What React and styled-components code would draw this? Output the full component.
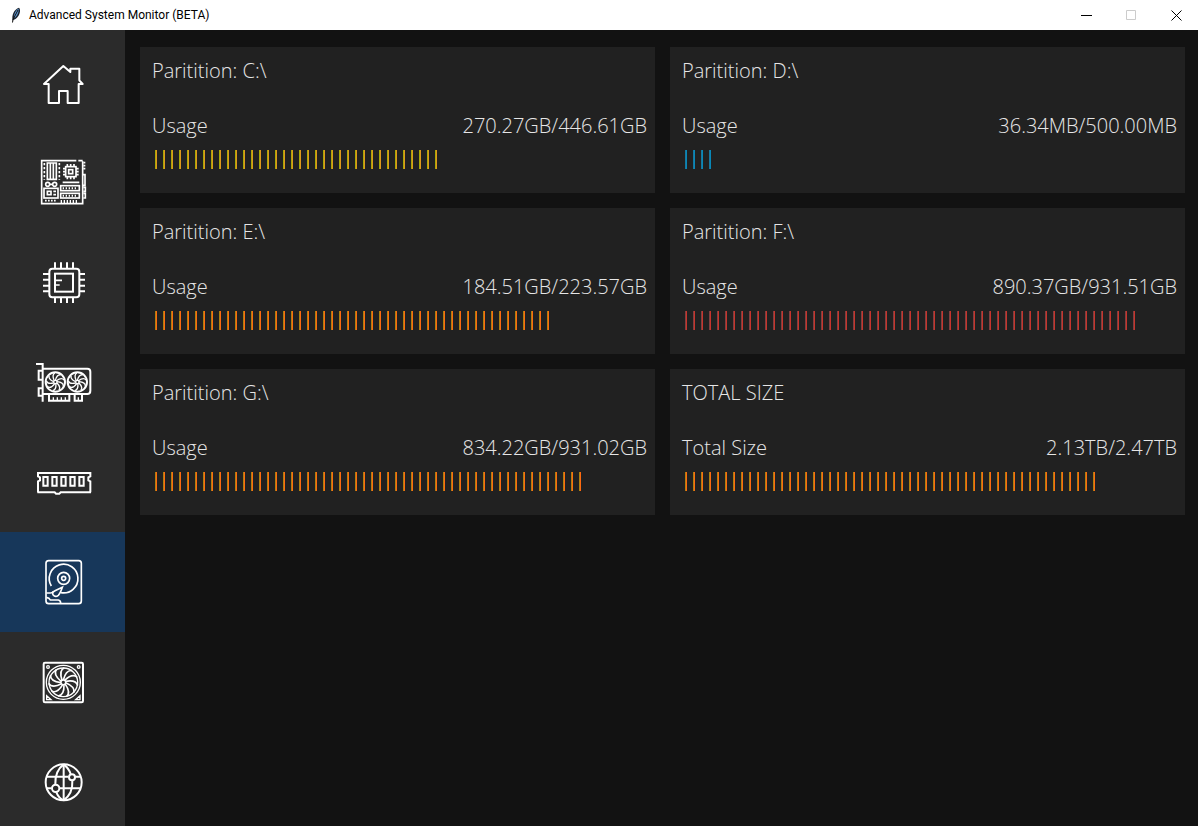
import React from "react";
import styled, { createGlobalStyle, css } from "styled-components";

const GlobalStyle = createGlobalStyle`
  *, *::before, *::after { box-sizing: border-box; }
  body {
    margin: 0;
    background: #121212;
    color: #e6e6e6;
    font-family: "Open Sans", "Noto Sans", sans-serif;
  }
`;

const Window = styled.div`
  display: flex;
  flex-direction: column;
  height: 100vh;
  overflow: hidden;
`;

const TitleBar = styled.header`
  display: flex;
  flex: none;
  align-items: center;
  height: 30px;
  padding-left: 8px;
  background: #ffffff;
  color: #000000;
`;

const WindowTitle = styled.h1`
  flex: 1;
  margin: 0 0 0 5px;
  font-family: Roboto, "Open Sans", sans-serif;
  font-size: 12px;
  font-weight: 400;
  line-height: 16px;
`;

const WindowButton = styled.button`
  display: flex;
  align-items: center;
  justify-content: center;
  width: 45px;
  height: 30px;
  padding: 0 0 0 2px;
  border: 0;
  background: transparent;
  color: ${(p) => (p.disabled ? "#cccccc" : "#000000")};
`;

const Body = styled.div`
  display: flex;
  flex: 1;
  min-height: 0;
`;

const Sidebar = styled.nav`
  display: flex;
  flex: none;
  flex-direction: column;
  width: 125px;
  padding-top: 2px;
  overflow: hidden;
  background: #2b2b2b;
`;

const NavButton = styled.button`
  display: flex;
  flex: none;
  align-items: center;
  height: 100px;
  padding: 0 0 0 30px;
  border: 0;
  background: transparent;
  color: #ffffff;
  ${(p) =>
    p.$active &&
    css`
      background: #17375a;
    `}
`;

const IconCanvas = styled.svg`
  display: block;
  width: 66px;
  height: 66px;
  fill: none;
  stroke: currentColor;
  stroke-width: 6;
`;

const Content = styled.main`
  display: grid;
  flex: 1;
  grid-template-columns: repeat(2, minmax(0, 1fr));
  align-content: start;
  gap: 15px;
  padding: 17px 13px 15px 15px;
  overflow: auto;
`;

const Card = styled.section`
  padding: 10px 8px 24px 12px;
  background: #212121;
  font-size: 20px;
  font-weight: 300;
  line-height: 28px;
`;

const CardTitle = styled.h2`
  margin: 0 0 27px;
  font-size: inherit;
  font-weight: inherit;
`;

const UsageRow = styled.div`
  display: flex;
  justify-content: space-between;
  margin-bottom: 10px;
`;

const TickBar = styled.div`
  height: 19px;
  margin-left: 3px;
  background: repeating-linear-gradient(
    to right,
    ${(p) => p.$left} 0 1px,
    ${(p) => p.$right} 1px 2px,
    transparent 2px 8px
  );
`;

const tones = {
  blue: ["#1878a0", "#0888b8"],
  amber: ["#a8a808", "#e0981c"],
  orange: ["#b08010", "#ff6a10"],
  red: ["#804040", "#c8342c"],
};

const partitions = [
  { title: "Paritition: C:\\", label: "Usage", value: "270.27GB/446.61GB", ticks: 36, tone: "amber" },
  { title: "Paritition: D:\\", label: "Usage", value: "36.34MB/500.00MB", ticks: 4, tone: "blue" },
  { title: "Paritition: E:\\", label: "Usage", value: "184.51GB/223.57GB", ticks: 50, tone: "orange" },
  { title: "Paritition: F:\\", label: "Usage", value: "890.37GB/931.51GB", ticks: 57, tone: "red" },
  { title: "Paritition: G:\\", label: "Usage", value: "834.22GB/931.02GB", ticks: 54, tone: "orange" },
  { title: "TOTAL SIZE", label: "Total Size", value: "2.13TB/2.47TB", ticks: 52, tone: "orange" },
];

function Icon({ top = -3, children }) {
  return (
    <IconCanvas viewBox={`0 ${top} 198 198`} aria-hidden="true">
      {children}
    </IconCanvas>
  );
}

function Blades({ cx, cy, inner, outer, count, width }) {
  const r = outer;
  const d = `M0 ${-inner} C ${r * 0.1} ${-r * 0.55}, ${r * 0.3} ${-r * 0.85}, ${r * 0.6} ${-r * 0.8}`;
  return (
    <g transform={`translate(${cx} ${cy})`} strokeWidth={width}>
      {Array.from({ length: count }, (_, i) => (
        <path key={i} d={d} transform={`rotate(${(i * 360) / count})`} />
      ))}
    </g>
  );
}

const HomeIcon = () => (
  <Icon top={-18}>
    <path
      strokeLinejoin="round"
      d="M42 87 100 33l21 18V41h27v35l10 11h-12v57h-33v-36H87v36H56V87Z"
    />
  </Icon>
);

const MotherboardIcon = () => (
  <Icon>
    <g strokeWidth="5">
      <path d="M158 34v127H35V32h104M145 32h13" />
      <path d="M160 38h6M160 47h6M160 56h6M158 74h7v32h-7M160 112h6v12h-6M160 130h6v14h-6" />
      <path d="M52 39h27v49H52zM61 39v49M70 39v49" />
      <path strokeDasharray="7 5" d="M43 39v50M88 39v50" />
      <rect x="107" y="50" width="31" height="30" />
      <rect x="116" y="59" width="12" height="12" />
      <path d="M112 42v8M122 42v8M132 42v8M112 80v8M122 80v8M132 80v8M99 56h8M99 65h8M99 74h8M138 56h8M138 65h8M138 74h8" />
      <circle cx="53" cy="103" r="6" />
      <circle cx="74" cy="103" r="6" />
      <path d="M59 103h9M98 97h50" />
      <rect x="92" y="107" width="56" height="15" />
      <rect x="92" y="130" width="56" height="14" />
      <path strokeWidth="4" d="M100 112v6M109 112v6M118 112v6M127 112v6M136 112v6M100 134v6M109 134v6M118 134v6M127 134v6M136 134v6" />
      <rect x="42" y="115" width="42" height="29" />
      <rect x="52" y="124" width="11" height="10" />
      <path d="M70 124h8M70 134h8" />
      <path strokeDasharray="5 4" d="M45 152h34" />
      <path strokeWidth="4" d="M94 150v10M103 150v10M112 150v10M121 150v10M130 150v10M139 150v10" />
    </g>
  </Icon>
);

const CpuIcon = () => (
  <Icon>
    <rect x="58" y="56" width="90" height="86" rx="9" />
    <rect x="75" y="71" width="54" height="54" />
    <path d="M77 91h19M77 105h12" strokeWidth="5" />
    <path d="M75 37v18M93 37v18M111 37v18M129 37v18M75 143v16M93 143v16M111 143v16M129 143v16" />
    <path d="M39 72h18M39 89h18M39 107h18M39 124h18M149 72h16M149 89h16M149 107h16M149 124h16" />
  </Icon>
);

const GpuIcon = () => (
  <Icon>
    <path d="M18 42h20v113M38 62H26v27h12M38 115H26v22h12" />
    <path d="M38 56h134q9 0 9 9v57q0 10-9 10H38" />
    <circle cx="76" cy="96" r="29" />
    <circle cx="142" cy="96" r="29" />
    <circle cx="76" cy="96" r="5" strokeWidth="4" />
    <circle cx="142" cy="96" r="5" strokeWidth="4" />
    <Blades cx={76} cy={96} inner={5} outer={27} count={9} width={4} />
    <Blades cx={142} cy={96} inner={5} outer={27} count={9} width={4} />
    <path d="M57 134v18h61v-18M134 134v18h22v-18" />
    <path strokeWidth="4" d="M70 142v8M82 142v8M94 142v8M106 142v8M145 142v8" />
  </Icon>
);

const RamIcon = () => (
  <Icon top={-33}>
    <path d="M24 97V64l6-3v-9l-6-3V39h157v10l-6 3v9l6 3v33" />
    <path d="M40 51h13v26H40zM67 51h13v26H67zM94 51h13v26H94zM121 51h13v26h-13zM148 51h13v26h-13z" />
    <path d="M22 97h52l4 4h10l4-4h91" />
  </Icon>
);

const DiskIcon = () => (
  <Icon>
    <g strokeWidth="5">
      <rect x="48" y="32" width="106" height="129" rx="8" />
      <path d="M64 108a43 43 0 1 1 29 20" />
      <circle cx="101" cy="85" r="18" />
      <circle cx="101" cy="85" r="6" />
      <path d="M97 112 75 122q-10 5-6 12 7 9 16 2 6-6 12-24Z" />
      <path d="M49 129h12q6 0 9-5M49 142q9 1 12 8h24q7 1 7 10" />
    </g>
  </Icon>
);

const FanIcon = () => (
  <Icon>
    <rect x="41" y="38" width="118" height="119" rx="4" />
    <circle cx="100" cy="97" r="51" strokeWidth="4" />
    <circle cx="100" cy="97" r="43" strokeWidth="4" />
    <circle cx="100" cy="97" r="7" strokeWidth="4" />
    <Blades cx={100} cy={97} inner={7} outer={44} count={11} width={5} />
    <g strokeWidth="4">
      <circle cx="54" cy="51" r="4" />
      <circle cx="146" cy="51" r="4" />
      <path d="M50 137v12h13ZM150 137v12h-13Z" />
    </g>
  </Icon>
);

const GlobeIcon = () => (
  <Icon>
    <circle cx="101" cy="97" r="54" />
    <path d="M101 43v108M49 80h66M136 80h16M49 115h16M90 115h63" />
    <path d="M101 43Q75 62 76 102M79 127q7 17 22 24M101 43q15 11 21 29M127 93q2 38-26 58" />
    <circle cx="126" cy="82" r="9" />
    <circle cx="77" cy="115" r="11" />
  </Icon>
);

const navItems = [
  { name: "Home", Glyph: HomeIcon },
  { name: "Motherboard", Glyph: MotherboardIcon },
  { name: "Processor", Glyph: CpuIcon },
  { name: "Graphics card", Glyph: GpuIcon },
  { name: "Memory", Glyph: RamIcon },
  { name: "Storage", Glyph: DiskIcon },
  { name: "Fans", Glyph: FanIcon },
  { name: "Network", Glyph: GlobeIcon },
];

const Feather = () => (
  <svg width="16" height="16" viewBox="0 0 16 16" aria-hidden="true">
    <path d="M4.5 13.5C3.5 8 6 2.5 11 .8c2.2 2.5.8 8-3.5 11.2Z" fill="#1c2430" />
    <path d="M6 10.5C6 6.5 8 3 10.5 1.8c.7 2.500-1 6.5-3.5 9Z" fill="#5c96d0" />
    <path d="M10 3 5 12.5 4.5 15.5" fill="none" stroke="#111" />
  </svg>
);

function PartitionCard({ title, label, value, ticks, tone }) {
  const [left, right] = tones[tone];
  return (
    <Card>
      <CardTitle>{title}</CardTitle>
      <UsageRow>
        <span>{label}</span>
        <span>{value}</span>
      </UsageRow>
      <TickBar
        role="meter"
        aria-label={`${title} ${label}`}
        aria-valuemin={0}
        aria-valuemax={60}
        aria-valuenow={ticks}
        $left={left}
        $right={right}
        style={{ width: ticks * 8 }}
      />
    </Card>
  );
}

export default function App() {
  return (
    <Window>
      <GlobalStyle />
      <TitleBar>
        <Feather />
        <WindowTitle>Advanced System Monitor (BETA)</WindowTitle>
        <WindowButton aria-label="Minimize">
          <svg width="11" height="11" viewBox="0 0 11 11">
            <path d="M0 5.5h11" stroke="currentColor" />
          </svg>
        </WindowButton>
        <WindowButton aria-label="Maximize" disabled>
          <svg width="11" height="11" viewBox="0 0 11 11">
            <path d="M.5.5h9v9h-9z" fill="none" stroke="currentColor" />
          </svg>
        </WindowButton>
        <WindowButton aria-label="Close">
          <svg width="11" height="11" viewBox="0 0 11 11">
            <path d="m.5.5 10 10m0-10-10 10" stroke="currentColor" />
          </svg>
        </WindowButton>
      </TitleBar>
      <Body>
        <Sidebar aria-label="Sections">
          {navItems.map(({ name, Glyph }) => (
            <NavButton
              key={name}
              aria-label={name}
              aria-current={name === "Storage" ? "page" : undefined}
              $active={name === "Storage"}
            >
              <Glyph />
            </NavButton>
          ))}
        </Sidebar>
        <Content>
          {partitions.map((p) => (
            <PartitionCard key={p.title} {...p} />
          ))}
        </Content>
      </Body>
    </Window>
  );
}
